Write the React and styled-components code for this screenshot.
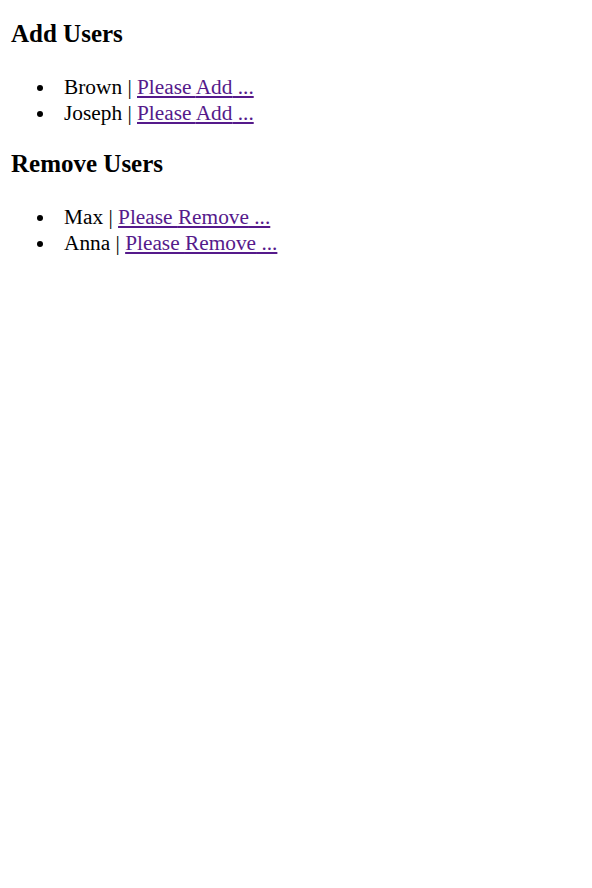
import React from "react";
import styled, { createGlobalStyle } from "styled-components";

const GlobalStyle = createGlobalStyle`
  body {
    margin: 0;
    background: #fff;
    font-family: "Liberation Serif", "Times New Roman", serif;
    color: #000;
  }
`;

const Page = styled.div`
  padding: 11px;
`;

const Heading = styled.h3`
  font-size: 25px;
  font-weight: bold;
  line-height: 28px;
  margin: 24px 0 26px;

  &:first-child {
    margin-top: 9px;
  }
`;

const UserList = styled.ul`
  list-style: disc outside;
  margin: 0;
  padding-left: 45px;
  font-size: 21.33px;
  line-height: 26px;
`;

const UserItem = styled.li`
  padding-left: 8px;
`;

const UserLink = styled.a`
  color: #551a8b;
  text-decoration: underline;
`;

const addUsers = ["Brown", "Joseph"];
const removeUsers = ["Max", "Anna"];

function Section({ title, users, action }) {
  return (
    <>
      <Heading>{title}</Heading>
      <UserList>
        {users.map((name) => (
          <UserItem key={name}>
            {name} | <UserLink href="#">Please {action} ...</UserLink>
          </UserItem>
        ))}
      </UserList>
    </>
  );
}

export default function App() {
  return (
    <Page>
      <GlobalStyle />
      <Section title="Add Users" users={addUsers} action="Add" />
      <Section title="Remove Users" users={removeUsers} action="Remove" />
    </Page>
  );
}
